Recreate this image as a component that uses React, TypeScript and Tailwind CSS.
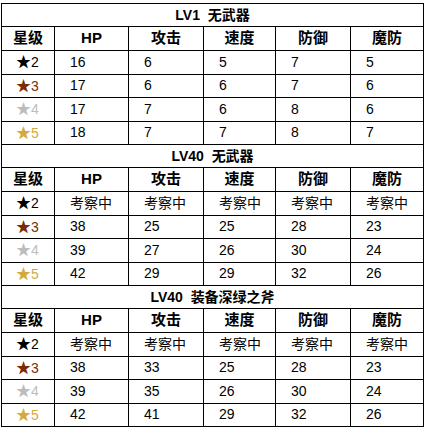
const stars = [
  { n: 2, color: 'text-black' },
  { n: 3, color: 'text-[#7b2c00]' },
  { n: 4, color: 'text-[#bdbdbd]' },
  { n: 5, color: 'text-[#d4aa3c]' },
]

const headers = ['星级', 'HP', '攻击', '速度', '防御', '魔防']

const sections = [
  {
    title: 'LV1',
    sub: '无武器',
    rows: [
      ['16', '6', '5', '7', '5'],
      ['17', '6', '6', '7', '6'],
      ['17', '7', '6', '8', '6'],
      ['18', '7', '7', '8', '7'],
    ],
  },
  {
    title: 'LV40',
    sub: '无武器',
    rows: [
      ['考察中', '考察中', '考察中', '考察中', '考察中'],
      ['38', '25', '25', '28', '23'],
      ['39', '27', '26', '30', '24'],
      ['42', '29', '29', '32', '26'],
    ],
  },
  {
    title: 'LV40',
    sub: '装备深绿之斧',
    rows: [
      ['考察中', '考察中', '考察中', '考察中', '考察中'],
      ['38', '33', '25', '28', '23'],
      ['39', '35', '26', '30', '24'],
      ['42', '41', '29', '32', '26'],
    ],
  },
]

const rowHeights = ['h-[23px]', 'h-[23px]', 'h-[23px]', 'h-[23px]']

export default function App() {
  return (
    <div className="min-h-[428px] w-[428px] bg-white pl-[1px] pt-[3px] font-['Liberation_Sans','Noto_Sans_CJK_SC',sans-serif] text-[14px] text-black">
      <table className="w-[423px] table-fixed border-collapse">
        <colgroup>
          <col className="w-[53px]" />
          <col className="w-[74px]" />
          <col className="w-[75px]" />
          <col className="w-[72px]" />
          <col className="w-[75px]" />
          <col className="w-[73px]" />
        </colgroup>
        <tbody>
          {sections.map((sec, si) => (
            <SectionRows key={si} sec={sec} />
          ))}
        </tbody>
      </table>
    </div>
  )
}

function SectionRows({ sec }: { sec: (typeof sections)[number] }) {
  return (
    <>
      {/* Section title */}
      <tr className="h-[23px]">
        <td colSpan={6} className="border border-black p-0 text-center align-middle font-bold">
          {sec.title}&nbsp;&nbsp;{sec.sub}
        </td>
      </tr>
      <tr className="h-[24px]">
        {headers.map((h) => (
          <td key={h} className="border border-black p-0 text-center align-middle text-[15px] font-bold">
            {h}
          </td>
        ))}
      </tr>
      {sec.rows.map((row, ri) => (
        <tr key={ri} className={rowHeights[ri]}>
          <td className={`border border-black py-0 pl-[14px] align-middle ${stars[ri].color}`}>
            <span className="text-[15px]">★</span>
            {stars[ri].n}
          </td>
          {row.map((v, ci) => (
            <td key={ci} className="border border-black py-0 pl-[15px] align-middle">
              {v}
            </td>
          ))}
        </tr>
      ))}
    </>
  )
}
